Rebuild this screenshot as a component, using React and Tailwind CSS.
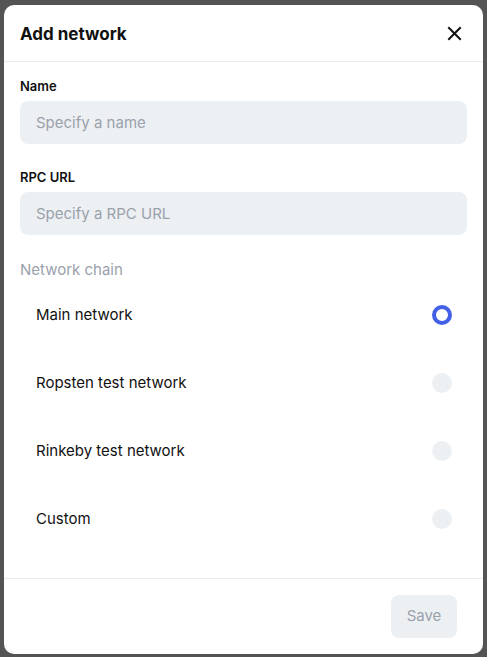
import { useState } from 'react'

const CHAINS = ['Main network', 'Ropsten test network', 'Rinkeby test network', 'Custom']

function Field({ label, placeholder }) {
  return (
    <div className="flex flex-col">
      <label className="text-[13px] font-semibold leading-4 text-[#111] mb-[7px]">{label}</label>
      <input
        placeholder={placeholder}
        className="h-[43px] rounded-lg bg-[#edf0f3] px-4 text-[15px] text-[#111] outline-none placeholder:text-[#9aa1ab]"
      />
    </div>
  )
}

export default function App() {
  const [chain, setChain] = useState(0)

  return (
    <div className="w-[487px] h-[657px] bg-[#545454] pt-[5px] pb-[3px] px-[4px]" style={{ fontFamily: 'Inter, "Noto Sans", sans-serif' }}>
      <div className="h-full bg-white rounded-[10px] flex flex-col overflow-hidden">
        {/* Header */}
        <div className="h-[57px] flex items-center justify-between pl-4 pr-[21px] pt-[3px] border-b border-[#ececec]">
          <h2 className="text-[17px] font-bold text-[#111]">Add network</h2>
          <button className="w-[15px] h-[15px] flex items-center justify-center text-[#111] -mt-[2px]">
            <svg width="15" height="15" viewBox="0 0 15 15" fill="none" stroke="currentColor" strokeWidth="2" strokeLinecap="square">
              <path d="M2 2 L13 13 M13 2 L2 13" />
            </svg>
          </button>
        </div>

        {/* Body */}
        <div className="flex-1 flex flex-col px-4 pt-4">
          <Field label="Name" placeholder="Specify a name" />
          <div className="mt-[25px]">
            <Field label="RPC URL" placeholder="Specify a RPC URL" />
          </div>
          <div className="mt-[25px] text-[15px] leading-5 text-[#9aa1ab]">Network chain</div>
          <div className="flex flex-col mt-px">
            {CHAINS.map((name, i) => (
              <button
                key={name}
                onClick={() => setChain(i)}
                className="h-[68px] flex items-center justify-between pl-4 pr-[15px] text-left"
              >
                <span className="text-[15px] text-[#111]">{name}</span>
                {chain === i ? (
                  <span className="w-5 h-5 rounded-full border-4 border-[#4361e6] bg-white" />
                ) : (
                  <span className="w-5 h-5 rounded-full bg-[#edf0f3]" />
                )}
              </button>
            ))}
          </div>
        </div>

        {/* Footer */}
        <div className="border-t border-[#ececec] flex justify-end pt-4 pb-4 pr-[26px]">
          <button className="h-[43px] w-[66px] rounded-lg bg-[#edf0f3] text-[15px] text-[#9aa1ab]">Save</button>
        </div>
      </div>
    </div>
  )
}
